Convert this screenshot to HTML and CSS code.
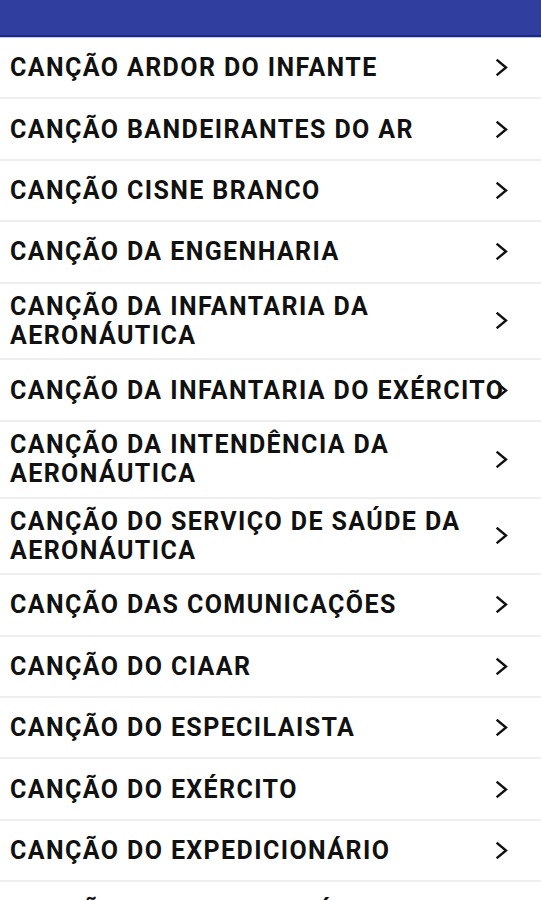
FILE: index.html
```html
<!DOCTYPE html>
<html lang="pt">
<head>
  <meta charset="UTF-8">
  <title>Canções Militares</title>
  <link rel="stylesheet" href="styles.css">
</head>
<body>
  <div class="app-bar"></div>
  <ul class="song-list">
    <li class="song-item"><span class="song-title">CANÇÃO ARDOR DO INFANTE</span><svg class="chevron" viewBox="0 0 12 17"><polyline points="1.5,1.5 10,8.5 1.5,15.5"/></svg></li>
    <li class="song-item"><span class="song-title">CANÇÃO BANDEIRANTES DO AR</span><svg class="chevron" viewBox="0 0 12 17"><polyline points="1.5,1.5 10,8.5 1.5,15.5"/></svg></li>
    <li class="song-item"><span class="song-title">CANÇÃO CISNE BRANCO</span><svg class="chevron" viewBox="0 0 12 17"><polyline points="1.5,1.5 10,8.5 1.5,15.5"/></svg></li>
    <li class="song-item"><span class="song-title">CANÇÃO DA ENGENHARIA</span><svg class="chevron" viewBox="0 0 12 17"><polyline points="1.5,1.5 10,8.5 1.5,15.5"/></svg></li>
    <li class="song-item"><span class="song-title">CANÇÃO DA INFANTARIA DA AERONÁUTICA</span><svg class="chevron" viewBox="0 0 12 17"><polyline points="1.5,1.5 10,8.5 1.5,15.5"/></svg></li>
    <li class="song-item"><span class="song-title">CANÇÃO DA INFANTARIA DO EXÉRCITO</span><svg class="chevron" viewBox="0 0 12 17"><polyline points="1.5,1.5 10,8.5 1.5,15.5"/></svg></li>
    <li class="song-item"><span class="song-title">CANÇÃO DA INTENDÊNCIA DA AERONÁUTICA</span><svg class="chevron" viewBox="0 0 12 17"><polyline points="1.5,1.5 10,8.5 1.5,15.5"/></svg></li>
    <li class="song-item"><span class="song-title">CANÇÃO DO SERVIÇO DE SAÚDE DA AERONÁUTICA</span><svg class="chevron" viewBox="0 0 12 17"><polyline points="1.5,1.5 10,8.5 1.5,15.5"/></svg></li>
    <li class="song-item"><span class="song-title">CANÇÃO DAS COMUNICAÇÕES</span><svg class="chevron" viewBox="0 0 12 17"><polyline points="1.5,1.5 10,8.5 1.5,15.5"/></svg></li>
    <li class="song-item"><span class="song-title">CANÇÃO DO CIAAR</span><svg class="chevron" viewBox="0 0 12 17"><polyline points="1.5,1.5 10,8.5 1.5,15.5"/></svg></li>
    <li class="song-item"><span class="song-title">CANÇÃO DO ESPECILAISTA</span><svg class="chevron" viewBox="0 0 12 17"><polyline points="1.5,1.5 10,8.5 1.5,15.5"/></svg></li>
    <li class="song-item"><span class="song-title">CANÇÃO DO EXÉRCITO</span><svg class="chevron" viewBox="0 0 12 17"><polyline points="1.5,1.5 10,8.5 1.5,15.5"/></svg></li>
    <li class="song-item"><span class="song-title">CANÇÃO DO EXPEDICIONÁRIO</span><svg class="chevron" viewBox="0 0 12 17"><polyline points="1.5,1.5 10,8.5 1.5,15.5"/></svg></li>
    <li class="song-item"><span class="song-title">CANÇÃO DO SOLDADO PÁRA-QUEDISTA</span><svg class="chevron" viewBox="0 0 12 17"><polyline points="1.5,1.5 10,8.5 1.5,15.5"/></svg></li>
  </ul>
</body>
</html>
```

FILE: styles.css
```css
html, body {
  margin: 0;
  padding: 0;
  background: #ffffff;
  overflow: hidden;
}
body {
  font-family: Roboto, "Liberation Sans", sans-serif;
  color: #111111;
}
.app-bar {
  height: 35px;
  background: #303f9f;
  border-bottom: 2px solid #1a2a8c;
  box-shadow: 0 1px 0 #c5cae9;
  margin-bottom: 1px;
}
.song-list {
  list-style: none;
  margin: 0;
  padding: 0;
}
.song-item {
  box-sizing: border-box;
  display: grid;
  align-items: center;
  min-height: 61.4px;
  padding: 8.4px 10px;
  border-bottom: 2px solid #eeeeee;
}
.song-title,
.chevron {
  grid-area: 1 / 1;
}
.song-title {
  font-size: 25px;
  font-weight: 700;
  line-height: 29px;
  letter-spacing: 1.4px;
}
.chevron {
  justify-self: end;
  width: 12px;
  height: 17px;
  margin-right: 23px;
  fill: none;
  stroke: #111111;
  stroke-width: 2.4;
  stroke-linecap: square;
}
```
